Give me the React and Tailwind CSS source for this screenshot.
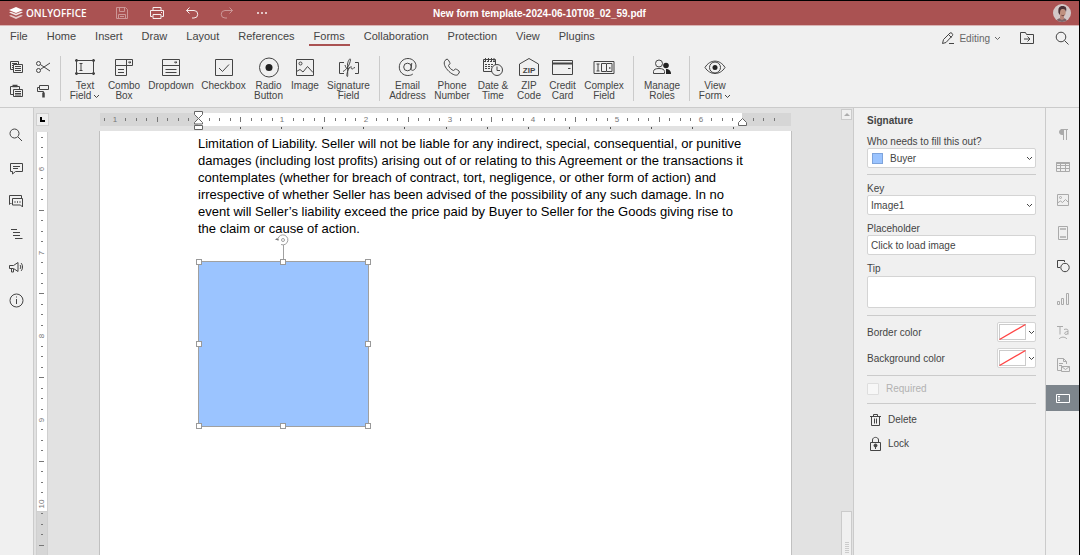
import React, { useState } from 'react';

const Icon = ({ w = 16, h = 16, children, className = '' }) => (
    <svg width={w} height={h} viewBox={`0 0 ${w} ${h}`} fill="none" stroke="currentColor" strokeWidth="1" className={`shrink-0 ${className}`} aria-hidden="true">
        {children}
    </svg>
);

const Chevron = ({ className = '' }) => (
    <Icon w={7} h={5} className={className}><path d="M1 1l2.5 2.5L6 1" /></Icon>
);

const HEADER_ACTIONS = [
    { id: 'Save', dim: true, icon: <><path d="M2.5 2.5h9l2 2v9h-11zM5.5 2.5v4h5v-4M4.5 13.5v-4h7v4M6 11.5h4" /></> },
    { id: 'Print', icon: <><path d="M4 5.5v-3h8v3M3.5 11.5h-2v-6h13v6h-2M4 9.5h8v4H4zM12 7.5h1" /></> },
    { id: 'Undo', icon: <><path d="M5.5 2.500l-3 3 3 3M2.500 5.500h7.500a3.700 3.700 0 0 1 0 7.500H8" /></> },
    { id: 'Redo', dim: true, icon: <><path d="M10.500 2.500l3 3-3 3M13.500 5.500H6a3.700 3.700 0 0 0 0 7.500h2" /></> },
    { id: 'More', icon: <><path d="M3 8h2M7 8h2M11 8h2" strokeWidth="1.5" /></> },
];

const TABS = ['File', 'Home', 'Insert', 'Draw', 'Layout', 'References', 'Forms', 'Collaboration', 'Protection', 'View', 'Plugins'];

const CLIPBOARD = [
    { id: 'Copy', icon: <><path d="M5 10.5H2.5v-8h8V5M4 4.5h5M4 6.5h1M4 8.5h1M5.5 5.5h9v8h-9zM7 7.5h6M7 9.5h6M7 11.5h6" /></> },
    { id: 'Cut', icon: <><circle cx="3.500" cy="4.500" r="2" /><circle cx="3.500" cy="11.500" r="2" /><path d="M5.300 5.500L15 12M5.300 10.500L15 4" /></> },
    { id: 'Paste', icon: <><path d="M5 11.5H2.5v-8h9V6M5.5 6.5h9v7h-9zM7 8.5h6M7 10.5h6M7 12h6" /><path d="M4.500 3h5" strokeWidth="2.5" /></> },
    { id: 'Format painter', icon: <><path d="M4.5 2.5h9v4h-9zM4.5 4.5h-2v4h6V10" /><path d="M8.5 9.5v5" strokeWidth="2.5" /></> },
];

const FORM_TOOLS = [
    [
        { lines: ['Text', 'Field'], width: 'w-[38px]', menu: true, icon: <><path d="M2.5 3.5h17v13h-17zM5.5 6.5h3M5.5 13.5h3M7 6.5v7" /><path d="M1 3.5h3M18 3.5h3M1 16.5h3M18 16.5h3M2.5 2v3M19.5 2v3M2.5 15v3M19.5 15v3" strokeWidth="1.5" /></> },
        { lines: ['Combo', 'Box'], width: 'w-[40px]', icon: <><path d="M2.5 2.5h17v6h-17zM13.5 2.5v6M2.5 8.5v10h11v-10M5 12.5h6M5 15.5h6" /><path d="M15.500 5h2.500l-1.250 1.250z" /></> },
        { lines: ['Dropdown'], width: 'w-[54px]', icon: <><path d="M2.5 2.5h17v16h-17zM2.5 8.5h17M5.5 12.5h11M5.5 15.5h11" /><path d="M14.500 5h2.500l-1.250 1.250z" /></> },
        { lines: ['Checkbox'], width: 'w-[51px]', icon: <><path d="M2.5 2.5h17v16h-17zM6 11l3.5 3.5L16 7.5" /></> },
        { lines: ['Radio', 'Button'], width: 'w-[39px]', icon: <><circle cx="11" cy="10.500" r="9.500" /><circle cx="11" cy="10.500" r="3.500" fill="#222" stroke="none" /></> },
        { lines: ['Image'], width: 'w-[34px]', icon: <><path d="M2.5 2.5h17v16h-17zM2.5 14.5l3.500-2 3 2.500 4.500-5.500 5.500 6" /><circle cx="6.500" cy="6.500" r="1.500" /></> },
        { lines: ['Signature', 'Field'], width: 'w-[53px]', icon: <><path d="M6 5.5H1.500v11H6M17 5.5h3.500v11H17" /><path d="M5 14.500c4-2 7-7 7.500-12 0-2-3 1-3 6 0 6 .500 11 0 11-2 0 1-8 2-9.500M7 8c1 4 3 5 6 1.500 0 3 1.500 3 2.500 1.500l1.500-.500" /></> },
    ],
    [
        { lines: ['Email', 'Address'], width: 'w-[45px]', icon: <><circle cx="10.500" cy="10" r="3.800" /><path d="M14.800 6l-.800 6c0 2.500 5 1.500 5-3 0-4-3.500-7.500-8-7.500-5 0-8.700 4-8.700 8.500 0 5 3.700 8.500 8.500 8.500 2 0 4-.500 5-1.500" /></> },
        { lines: ['Phone', 'Number'], width: 'w-[44px]', icon: <><path d="M4 3.500l2-1.500c1 0 3 3.500 3 4.500l-1.500 2c.500 2 3 4.500 5 5l2-1.500c1 0 4 2 4 3l-1.500 2.500c-1.500 1.500-5 .500-9-3C4 10.500 2 6.500 4 3.500z" /></> },
        { lines: ['Date &', 'Time'], width: 'w-[38px]', icon: <><path d="M10 14.5H1.5v-12h12V8" /><path d="M2 4.500h11M3 7.500h9M3 9.500h7M3 11.500h6" strokeDasharray="2 1" /><path d="M3.500 1v3M6.500 1v3M9.500 1v3M12 1v3" /><circle cx="15" cy="13" r="5.500" /><path d="M15 9.500v4h3" /></> },
        { lines: ['ZIP', 'Code'], width: 'w-[34px]', icon: <><path d="M1.500 18.500V7L11 1.500 20.500 7v11.500z" /><text x="11" y="15.500" textAnchor="middle" fill="currentColor" stroke="none" className="font-['Liberation_Sans'] text-[8px] font-bold">ZIP</text></> },
        { lines: ['Credit', 'Card'], width: 'w-[33px]', icon: <><path d="M.5 3.5h20v14H.5zM16 11.500h2.500" /><path d="M.5 6.5h20" strokeWidth="2" /></> },
        { lines: ['Complex', 'Field'], width: 'w-[50px]', icon: <><path d="M1 4.500h20v12H1zM3.500 7h3M3.500 14h3M5 7v7M8.500 6.500v8h5v-8zM14 6.500h5v8h-5" /><path d="M16 11h1.500" strokeWidth="1.500" /></> },
    ],
    [
        { lines: ['Manage', 'Roles'], width: 'w-[46px]', icon: <><circle cx="8" cy="6.500" r="3.500" /><path d="M2.500 16.500v-2c0-2 2-3 5.500-3s5.500 1 5.500 3v2z" /><circle cx="15" cy="8.500" r="2.800" fill="#222" stroke="none" /><path d="M15 12c3 0 5 1.500 5 5h-5z" fill="#222" stroke="none" /></> },
    ],
    [
        { lines: ['View', 'Form'], width: 'w-[40px]', menu: true, icon: <><path d="M1 10.500C6 2 16 2 21 10.500 16 18.500 6 18.500 1 10.500z" /><circle cx="11" cy="10.500" r="5.500" /><circle cx="11" cy="10.500" r="2.500" fill="#222" stroke="none" /></> },
    ],
];

const LEFT_ITEMS = [
    { id: 'Find', icon: <><circle cx="6.500" cy="6.500" r="4.500" /><path d="M10 10L14 14" /></> },
    { id: 'Comments', icon: <><path d="M2.500 3.500h12v8h-7l-3 2.500v-2.500h-2zM5 6.500h7M5 8.500h5" /></> },
    { id: 'Chat', icon: <><path d="M3.500 10.500h-1l-1 1V2.500h12V5M4.500 5.500h10v8.500l-2-2h-8z" /><path d="M6.500 9h1M9 9h1M11.500 9h1" strokeWidth="1.5" /></> },
    { id: 'Headings', icon: <><path d="M3 3.500h6M5 6.500h7M5 9.500h7M7 12.500h7.500" /></> },
    { id: 'Feedback', icon: <><path d="M1.500 6.500h4l4.500-3v9l-4.500-3h-4zM3.500 10v3h2v-3M12 6c1 1 1 3 0 4M13 4c2 2 2 6 0 8" /></> },
    { id: 'About', icon: <><circle cx="8.500" cy="8.500" r="6.500" /><path d="M8.500 7v5M8.500 4.500v1" /></> },
];

const RIGHT_ITEMS = [
    { id: 'Paragraph settings', icon: <><path d="M8.500 3v11M11.500 3v11M6 3.500h7" /><path d="M8 3.500H7a2.500 2.500 0 0 0 0 5h1z" fill="currentColor" /></> },
    { id: 'Table settings', icon: <><path d="M1.5 3.5h13v9h-13zM1.5 6.5h13M1.5 9.5h13M5.500 4v8M10.500 4v8" /><path d="M1.500 4h13" strokeWidth="2" /></> },
    { id: 'Image settings', icon: <><path d="M2.5 2.5h11v11h-11zM2.500 11l3-2 2 1.500 3-3 3 3" /><circle cx="5.500" cy="5.500" r="1" /></> },
    { id: 'Header settings', icon: <><path d="M3.5 1.5h9v13h-9z" /><path d="M5 4h6M5 12h6" strokeWidth="1.500" /></> },
    { id: 'Shape settings', enabled: true, icon: <><path d="M5 9.500H2.500v-7h7V4" /><circle cx="10" cy="9.500" r="4.200" /></> },
    { id: 'Chart settings', icon: <><path d="M2.5 10.500h2v3h-2zM6.500 7.500h2v6h-2zM11.500 2.500h2v11h-2z" /></> },
    { id: 'Text Art settings', icon: <><path d="M2 2.500h6M5 2.500v8M9 5.500c3-1 4 0 4 1v4M13 7.500c-4 0-4 3-2 3l2-1M4 15c2-2.500 6-2.500 8 0" /></> },
    { id: 'Mail merge settings', icon: <><path d="M6 13.5H2.5v-12h6l3 3V7M8.500 1.500v3h3M4 6.500h4M4 8.500h3M6.500 9.500h8v5h-8zM6.500 9.500l4 3 4-3" /></> },
    { id: 'Form settings', active: true, icon: <><path d="M1.5 4.5h13v8h-13zM3 6.500h2M3 10.500h2M4 6.500v4" /></> },
];

const PARAGRAPH = [
    'Limitation of Liability. Seller will not be liable for any indirect, special, consequential, or punitive',
    'damages (including lost profits) arising out of or relating to this Agreement or the transactions it',
    'contemplates (whether for breach of contract, tort, negligence, or other form of action) and',
    'irrespective of whether Seller has been advised of the possibility of any such damage. In no',
    'event will Seller’s liability exceed the price paid by Buyer to Seller for the Goods giving rise to',
    'the claim or cause of action.',
];

const INCH = 83.7;

const Header = () => (
    <header className="flex h-[25px] shrink-0 items-center border-b border-[#d9b4b4] bg-[#aa5252] text-white">
        <div className="flex w-[108px] items-center gap-[3px] pl-[9px]">
            <svg width="14" height="13" viewBox="0 0 14 13" fill="white" aria-hidden="true">
                <path d="M7 0l7 3-7 3-7-3z" />
                <path d="M0 5.500l2-.800 5 2.100 5-2.100 2 .800-7 3z" opacity=".85" />
                <path d="M0 8.800l2-.800 5 2.100 5-2.100 2 .800-7 3.200z" opacity=".7" />
            </svg>
            <span className="font-['Open_Sans'] text-[10px] leading-3 font-semibold">ONLYOFFICE</span>
        </div>
        <div className="flex w-[172px] gap-[15px] pl-1">
            {HEADER_ACTIONS.map((a) => (
                <button key={a.id} aria-label={a.id} className={`flex w-5 justify-center ${a.dim ? 'opacity-40' : 'opacity-90'}`}>
                    <Icon>{a.icon}</Icon>
                </button>
            ))}
        </div>
        <h1 className="flex-1 text-center text-[10px] font-bold">New form template-2024-06-10T08_02_59.pdf</h1>
        <div className="flex w-[280px] justify-end pr-2">
            <svg width="18" height="18" viewBox="0 0 18 18" role="img" aria-label="User">
                <clipPath id="face"><circle cx="9" cy="9" r="9" /></clipPath>
                <g clipPath="url(#face)">
                    <rect width="18" height="18" fill="#d3c8c8" />
                    <path d="M3 18c0-3 3-4 6-4s5 1 5 4z" fill="#7c6468" />
                    <path d="M7 11h4v4l-2 1-2-1z" fill="#b98577" />
                    <ellipse cx="9.500" cy="8" rx="3.200" ry="4.300" fill="#c0917f" />
                    <path d="M5.500 9C5 4 6 2 9.500 2 13 2 14 4 13 8c-.500-2-1-3-3-3-2.500 0-3 1-3 6z" fill="#4b3338" />
                    <path d="M8 10.500c1 1 2 1 3.500 0-.300 2-3 2.500-3.500 0z" fill="#6d4340" />
                </g>
            </svg>
        </div>
    </header>
);

const Toolbar = () => {
    const [tab, setTab] = useState('Forms');

    return (
        <div className="shrink-0 border-b border-[#cbcbcb]">
            <div className="flex h-[22px] items-start justify-between">
                <nav className="flex gap-[9px] pl-[5px]">
                    {TABS.map((t) => (
                        <button
                            key={t}
                            onClick={() => setTab(t)}
                            className={`h-5 border-b-2 px-[5px] pt-px text-[11px] leading-4 ${t === tab ? 'border-[#aa5252]' : 'border-transparent'}`}
                        >
                            {t}
                        </button>
                    ))}
                </nav>
                <div className="flex items-center pt-1 pr-[10px]">
                    <button className="mr-[18px] flex items-center gap-[4px] text-[10px] text-[#666]">
                        <Icon w={14} h={14} className="text-[#444]"><path d="M1.500 12.500l1-4L9 2c1-1 3.500 1 2.500 2.500L5 11.500zM7.500 3.500l3 3M8 12.500h5" /></Icon>
                        Editing
                        <Chevron />
                    </button>
                    <button aria-label="Open file location" className="mr-5">
                        <Icon><path d="M1.500 13.500v-11h5l1 2h7v9zM5 9h6M8.500 6.500L11 9l-2.500 2.500" /></Icon>
                    </button>
                    <button aria-label="Search"><Icon w={14} h={14}><circle cx="6" cy="6" r="4.800" /><path d="M9.500 9.500l4 4" /></Icon></button>
                </div>
            </div>
            <div className="flex h-[59px] items-start pt-2">
                <div className="grid grid-cols-2 gap-x-[11px] gap-y-2 pt-[3px] pr-[9px] pl-2">
                    {CLIPBOARD.map((c) => (
                        <button key={c.id} aria-label={c.id}><Icon>{c.icon}</Icon></button>
                    ))}
                </div>
                {FORM_TOOLS.map((group, i) => (
                    <div key={i} className="flex items-start">
                        <div className="mr-[5px] h-[45px] border-l border-[#cbcbcb]" />
                        {group.map((tool) => (
                            <button key={tool.lines[0]} className={`flex flex-col items-center text-[10px] leading-[10px] whitespace-nowrap ${tool.width}`}>
                                <Icon w={22} h={21} className="mt-px mb-[3px]">{tool.icon}</Icon>
                                <span>{tool.lines[0]}</span>
                                {tool.lines[1] && (
                                    <span className="flex items-center gap-[2px]">
                                        {tool.lines[1]}
                                        {tool.menu && <Chevron />}
                                    </span>
                                )}
                            </button>
                        ))}
                        <div className="w-[4px]" />
                    </div>
                ))}
            </div>
        </div>
    );
};

const LeftBar = () => (
    <aside className="flex w-[34px] shrink-0 flex-col border-r border-[#cbcbcb] pt-[10px] pr-px">
        {LEFT_ITEMS.map((item) => (
            <button key={item.id} aria-label={item.id} className="flex h-[33px] items-center justify-center">
                <Icon>{item.icon}</Icon>
            </button>
        ))}
    </aside>
);

const HorizontalRuler = () => {
    const zero = 99.5;
    const ticks = [];
    for (let i = -9; i <= 55; i++) ticks.push(i);

    return (
        <svg width="693" height="23" className="shrink-0" aria-hidden="true">
            <rect x="1" y="5" width="691" height="13" fill="#d6d6d6" />
            <rect x="99" y="5" width="544" height="13" fill="#fff" />
            {ticks.map((i) => {
                const x = Math.round(zero + (i * INCH) / 8);
                if (i === 0 || i === 52) return null;
                if (i % 8 === 0) {
                    return <text key={i} x={x} y="14" textAnchor="middle" fill="#777" className="text-[8px]">{Math.abs(i / 8)}</text>;
                }
                const tall = i % 4 === 0;
                return <rect key={i} x={x} y={tall ? 9 : 10} width="1" height={tall ? 5 : 3} fill="#777" />;
            })}
            {Array.from({ length: 13 }, (_, i) => (
                <rect key={i} x={Math.round(141 + i * 41.1)} y="19" width="1" height="2" fill="#555" />
            ))}
            <g fill="#fff" stroke="#666">
                <path d="M95.5 3.5h8v3l-4 4-4-4zM99.5 10.5l4 4v1.500h-8v-1.500zM95.5 17.500h8v4h-8z" />
                <path d="M639.500 17.500v-3l4-4 4 4v3z" />
            </g>
        </svg>
    );
};

const VerticalRuler = () => {
    const ticks = [];
    for (let i = 0; i <= 40; i++) ticks.push(i);

    return (
        <div className="flex w-4 shrink-0 flex-col gap-[6px] pt-[5px] pl-[2px]">
            <button aria-label="Left tab" className="flex size-[13px] shrink-0 items-center justify-center border border-[#d0d0d0] bg-[#efefef]">
                <Icon w={7} h={7} className="text-black"><path d="M2 1v4h4" strokeWidth="2" /></Icon>
            </button>
            <svg width="12" height="424" className="shrink-0" aria-hidden="true">
                <rect x="0" width="12" height="424" fill="#cfcfcf" />
                <rect x="1" width="10" height="379" fill="#fff" />
                <rect x="1" y="380" width="10" height="44" fill="#d6d6d6" />
                {ticks.map((i) => {
                    const y = Math.round(4.5 + (i * INCH) / 8);
                    if (i % 8 === 3) {
                        return <text key={i} x="8" y={y + 1} textAnchor="middle" transform={`rotate(-90 8 ${y + 1})`} fill="#777" className="text-[8px]">{6 + (i - 3) / 8}</text>;
                    }
                    const wide = i % 8 === 7;
                    return <rect key={i} x={wide ? 3 : 5} y={y} width={wide ? 5 : 2} height="1" fill="#777" />;
                })}
            </svg>
        </div>
    );
};

// resize handles, placed over the edges of the selected field
const HANDLES = [
    '-left-[3px] -top-[3px]', 'left-[81px] -top-[3px]', '-right-[3px] -top-[3px]',
    '-left-[3px] top-[79px]', '-right-[3px] top-[79px]',
    '-left-[3px] -bottom-[3px]', 'left-[81px] -bottom-[3px]', '-right-[3px] -bottom-[3px]',
];

const DocumentPage = () => (
    <div className="w-[693px] flex-1 border-x border-[#c0c0c0] bg-white pt-1 pl-[98px]">
        <p className="text-[13px] leading-[17px] whitespace-nowrap text-black">
            {PARAGRAPH.map((line) => (
                <span key={line} className="block">{line}</span>
            ))}
        </p>
        <div className="relative mt-6 h-[166px] w-[171px] border border-[#a0a0a0] bg-[#9bc4ff]">
            <svg width="16" height="30" viewBox="0 0 16 30" fill="none" stroke="#a0a0a0" className="absolute -top-[30px] left-[76px]" aria-hidden="true">
                <circle cx="8" cy="8" r="7.500" fill="#fff" stroke="none" />
                <path d="M3 9a5 5 0 1 1 3 3.500M8.500 13v17" />
                <circle cx="8" cy="8" r="1.500" />
                <path d="M0 8l2-2 2 2z" fill="#777" stroke="none" />
            </svg>
            {HANDLES.map((pos) => (
                <span key={pos} className={`absolute size-[6px] border border-[#999] bg-white ${pos}`} />
            ))}
        </div>
    </div>
);

const ScrollBar = () => (
    <div className="flex w-3 shrink-0 flex-col justify-between">
        <button aria-label="Scroll up" className="mt-px flex h-[11px] w-[11px] items-center justify-center border border-[#cbcbcb] bg-[#f0f0f0]">
            <svg width="6" height="3" viewBox="0 0 6 3" fill="#adadad"><path d="M0 3l3-3 3 3z" /></svg>
        </button>
        <div className="flex h-[44px] w-[11px] flex-col items-center gap-px border border-b-0 border-[#cbcbcb] bg-[#f0f0f0] pt-[30px]">
            {[0, 1, 2, 3, 4, 5].map((i) => <div key={i} className="h-px w-1 shrink-0 bg-[#cbcbcb]" />)}
        </div>
    </div>
);

const Divider = ({ className }) => <hr className={`border-[#cbcbcb] ${className}`} />;

const FIELD = 'block h-5 w-full appearance-none rounded-[2px] border border-[#d4d4d4] bg-white px-[3px] pt-px text-[10px] text-[#444] outline-none';

const SelectField = ({ id, label, value, swatch }) => (
    <div>
        <label htmlFor={id} className="block h-3 leading-3">{label}</label>
        <div className="relative">
            <select id={id} defaultValue={value} className={`${FIELD} ${swatch ? 'pl-[22px]' : ''}`}>
                <option>{value}</option>
            </select>
            {swatch && <span className="absolute top-[5px] left-[5px] size-[11px] border border-[#7ea4dc] bg-[#9bc4ff]" />}
            <Chevron className="pointer-events-none absolute top-2 right-[3px]" />
        </div>
    </div>
);

const ColorRow = ({ label, className }) => (
    <div className={`flex h-5 items-center justify-between ${className}`}>
        <span className="pt-px">{label}</span>
        <button aria-label={label} className="flex h-5 w-[39px] items-center gap-[2px] rounded-[2px] border border-[#d4d4d4] bg-white pl-px">
            <svg width="27" height="16" viewBox="0 0 27 16" fill="none" aria-hidden="true">
                <rect x=".5" y=".5" width="26" height="15" stroke="#cbcbcb" />
                <path d="M.5 15.500l26-15" stroke="#f44" strokeWidth="1.300" />
            </svg>
            <Chevron />
        </button>
    </div>
);

const SettingsPanel = () => (
    <section className="w-[193px] shrink-0 border-x border-[#cbcbcb] pt-[7px] pr-[9px] pl-[13px] text-[10px] leading-3">
        <h2 className="font-bold">Signature</h2>
        <div className="mt-[9px]"><SelectField id="role" label="Who needs to fill this out?" value="Buyer" swatch /></div>
        <Divider className="mt-[6px] mb-[8px]" />
        <SelectField id="key" label="Key" value="Image1" />
        <label htmlFor="placeholder" className="mt-2 block h-3">Placeholder</label>
        <input id="placeholder" defaultValue="Click to load image" className={FIELD} />
        <label htmlFor="tip" className="mt-2 block h-3">Tip</label>
        <textarea id="tip" className="mt-px block h-8 w-full resize-none rounded-[2px] border border-[#d4d4d4] bg-white px-[3px] outline-none" />
        <Divider className="mt-[7px]" />
        <ColorRow label="Border color" className="mt-[6px]" />
        <ColorRow label="Background color" className="mt-[6px]" />
        <Divider className="mt-[7px]" />
        <label className="mt-[7px] flex h-3 items-center gap-[7px] text-[#b2b2b2]">
            <input type="checkbox" disabled className="size-3 appearance-none rounded-[1px] border border-[#dedede] bg-[#f7f7f7]" />
            Required
        </label>
        <Divider className="mt-2" />
        <button className="mt-2 flex h-4 items-center gap-[5px]">
            <Icon><path d="M3 4.5h11M4.5 4.5v9h8v-9M6.5 4.5v-2h4v2M7.500 6.500v5M9.500 6.500v5" /></Icon>
            Delete
        </button>
        <button className="mt-2 flex h-4 items-center gap-[5px]">
            <Icon><path d="M3.5 6.5h10v8h-10zM5.5 6.500V4c0-3.500 6-3.500 6 0v2.500M8.500 9v4" /><circle cx="8.500" cy="9.500" r="1.500" fill="currentColor" /></Icon>
            Lock
        </button>
    </section>
);

const RightBar = () => (
    <aside className="flex w-[33px] shrink-0 flex-col gap-[7px] pt-[13px]">
        {RIGHT_ITEMS.map((item) => (
            <button
                key={item.id}
                aria-label={item.id}
                className={`flex h-[26px] items-center justify-center ${item.active ? 'bg-[#7d858c] text-white' : item.enabled ? 'text-[#444]' : 'text-[#aaa]'}`}
            >
                <Icon>{item.icon}</Icon>
            </button>
        ))}
    </aside>
);

const App = () => (
    <div className="flex h-screen flex-col overflow-hidden border-t border-r border-black bg-[#f0f0f0] font-['Liberation_Sans',Arial,sans-serif] text-[#444]">
        <Header />
        <Toolbar />
        <div className="flex min-h-0 flex-1">
            <LeftBar />
            <main className="flex min-w-0 flex-1 overflow-hidden bg-[#e2e2e2]">
                <VerticalRuler />
                <div className="flex min-w-0 flex-1 flex-col items-center">
                    <HorizontalRuler />
                    <DocumentPage />
                </div>
                <ScrollBar />
            </main>
            <SettingsPanel />
            <RightBar />
        </div>
    </div>
);

export default App;
